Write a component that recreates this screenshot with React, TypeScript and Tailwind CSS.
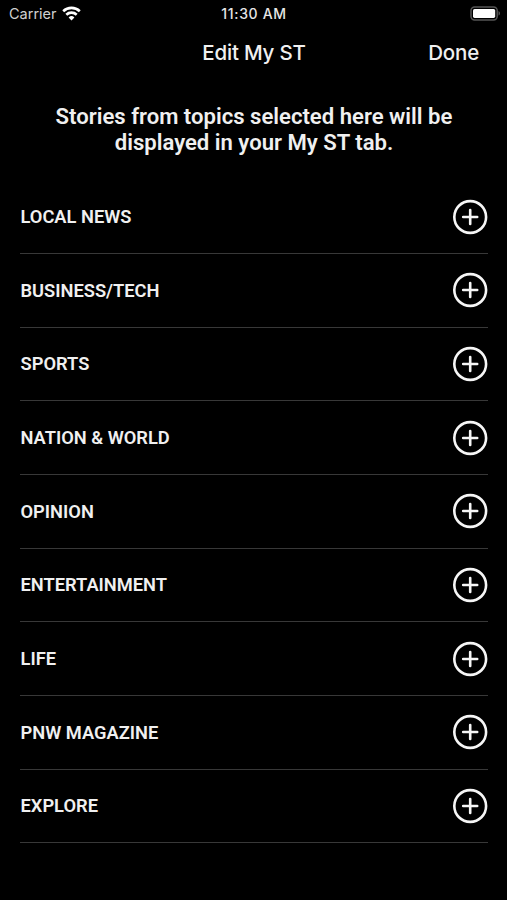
import React, { useState } from 'react';

const TOPICS = [
  'LOCAL NEWS',
  'BUSINESS/TECH',
  'SPORTS',
  'NATION & WORLD',
  'OPINION',
  'ENTERTAINMENT',
  'LIFE',
  'PNW MAGAZINE',
  'EXPLORE',
];

const WifiIcon = () => (
  <svg className="h-[15px] w-[19px]" viewBox="0 0 19 15" fill="none" stroke="#fff" strokeWidth="2.6">
    <path d="M1.2 5.2a12 12 0 0 1 16.6 0" />
    <path d="M4.3 8.7a7.5 7.5 0 0 1 10.4 0" />
    <path d="M9.5 14.4 6.6 11.5a4.2 4.2 0 0 1 5.8 0Z" fill="#fff" stroke="none" />
  </svg>
);

const BatteryIcon = () => (
  <svg className="h-[15px] w-[31px]" viewBox="0 0 31 15">
    <rect x="1" y="0.9" width="26.2" height="13" rx="3.6" fill="none" stroke="#555" strokeWidth="1.5" />
    <rect x="3" y="2.9" width="22.2" height="9" rx="1.6" fill="#fff" />
    <path d="M28.5 5v4.6c2-.8 2-3.8 0-4.6Z" fill="#555" />
  </svg>
);

const AddIcon = () => (
  <svg className="h-9 w-9" viewBox="0 0 36 36" fill="none" stroke="#f6f6f6" strokeWidth="2.6">
    <circle cx="18.2" cy="18" r="15.9" />
    <path d="M18.2 11v14M11.2 18h14" strokeLinecap="round" />
  </svg>
);

const App: React.FC = () => {
  const [selected, setSelected] = useState<string[]>([]);

  const toggleTopic = (topic: string) => {
    setSelected((prev) =>
      prev.includes(topic) ? prev.filter((t) => t !== topic) : [...prev, topic]
    );
  };

  return (
    <div className="h-[900px] w-[507px] overflow-hidden bg-black font-['Roboto',sans-serif] text-[#f0f0f0]">
      {/* Status bar */}
      <div className="grid h-[26px] grid-cols-3 items-center pr-[6px] pl-[9px] font-['Inter',sans-serif]">
        <div className="flex items-center gap-[5px]">
          <span className="pt-px text-[14.5px] text-[#d0d0d0]">Carrier</span>
          <WifiIcon />
        </div>
        <span className="pt-px pr-[2px] text-center text-[14px] font-medium tracking-[0.65px] text-[#e6e6e6]">
          11:30 AM
        </span>
        <div className="flex justify-end">
          <BatteryIcon />
        </div>
      </div>

      {/* Navigation bar */}
      <div className="grid h-[52px] grid-cols-[1fr_auto_1fr] items-center px-7 pt-[3px] font-['Inter',sans-serif] text-[20.5px] tracking-[-0.2px]">
        <span />
        <h1 className="pl-px font-medium">Edit My ST</h1>
        <button className="justify-self-end font-medium">Done</button>
      </div>

      <p className="pt-[25px] pr-8 pl-[33px] text-center text-[22.1px] leading-[26px] font-semibold">
        Stories from topics selected here will be
        <br />
        displayed in your My ST tab.
      </p>

      {/* Topics */}
      <ul className="mt-[25.3px] pr-[19px] pl-5">
        {TOPICS.map((topic) => (
          <li
            key={topic}
            className="flex h-[73.7px] items-center justify-between border-b border-[#383838]"
          >
            <span className="pl-[0.5px] text-[18.3px] font-semibold">{topic}</span>
            <button onClick={() => toggleTopic(topic)} aria-pressed={selected.includes(topic)} aria-label={topic}>
              <AddIcon />
            </button>
          </li>
        ))}
      </ul>
    </div>
  );
};

export default App;
